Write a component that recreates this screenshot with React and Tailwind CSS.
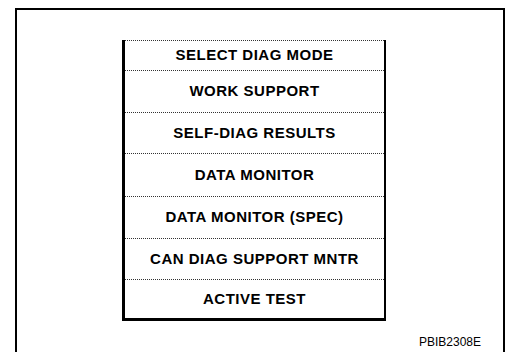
export default function App() {
  const ROWS = [
    { label: 'WORK SUPPORT', h: 'h-[42px]' },
    { label: 'SELF-DIAG RESULTS', h: 'h-[41px]' },
    { label: 'DATA MONITOR', h: 'h-[43px]' },
    { label: 'DATA MONITOR (SPEC)', h: 'h-[42px]' },
    { label: 'CAN DIAG SUPPORT MNTR', h: 'h-[41px]' },
    { label: 'ACTIVE TEST', h: 'h-[39px]' }
  ];

  return (
    <div className="w-[505px] h-[352px] overflow-hidden bg-white font-['Liberation_Sans',Arial,sans-serif] text-black">
      <div className="ml-[15px] mt-[8px] w-[490px] h-[400px] border-2 border-black pt-[30px] pl-[105px] flex flex-col">
        {/* menu table */}
        <div className="w-[264px] border-solid border-l-[3px] border-r-2 border-b-[3px] border-black">
          <div className="h-[30px] border-t border-dotted border-[#333] flex items-center justify-center text-[15px] font-bold tracking-[0.5px]">
            SELECT DIAG MODE
          </div>
          {ROWS.map((r) => (
            <div
              key={r.label}
              className={`${r.h} border-t border-dotted border-[#333] flex items-center justify-center text-[15px] font-bold tracking-[0.5px]`}
            >
              {r.label}
            </div>
          ))}
        </div>
        <div className="w-[359px] text-right text-[12px] mt-[15px] leading-none">PBIB2308E</div>
      </div>
    </div>
  );
}
